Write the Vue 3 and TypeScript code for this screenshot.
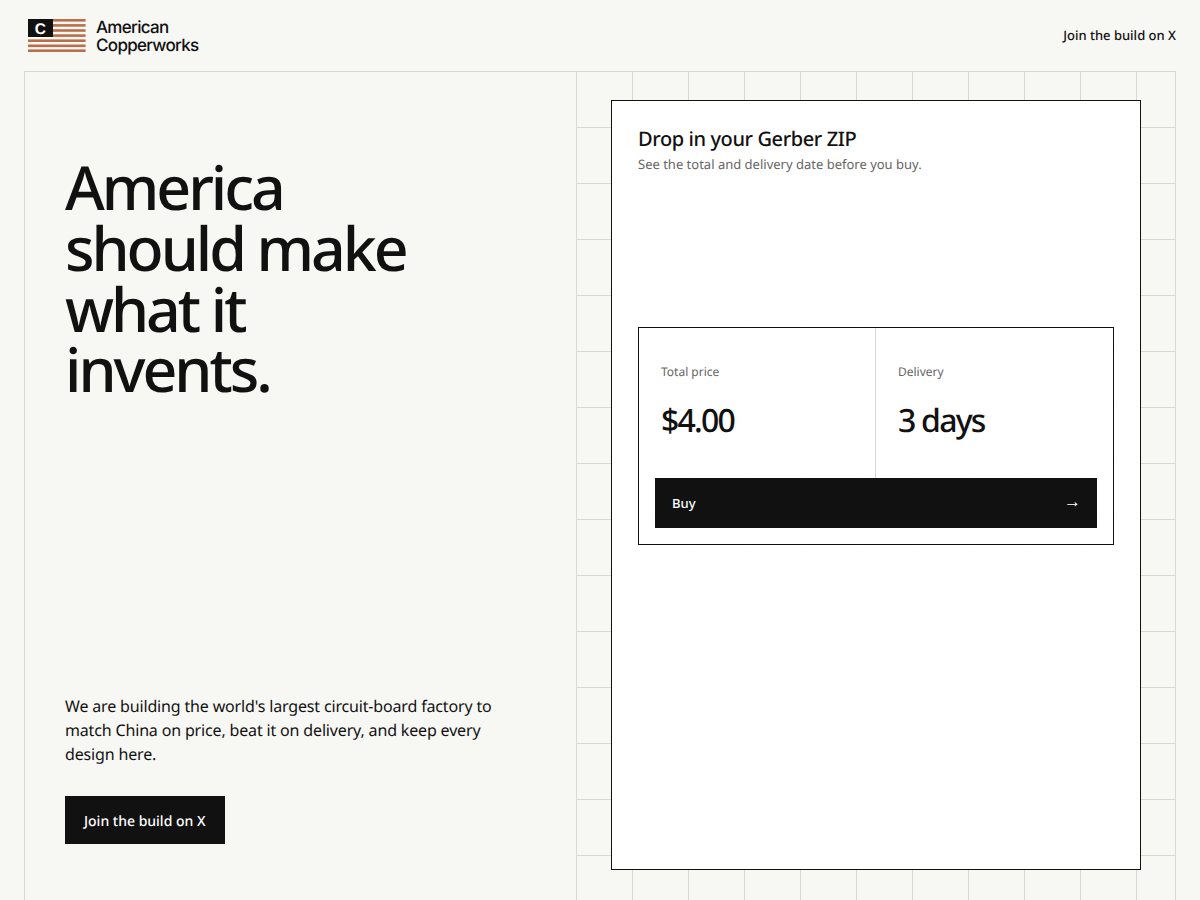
<template>
  <div class="page">
    <header class="topbar">
      <a class="brand" href="#">
        <svg class="flag" width="58" height="33" viewBox="0 0 58 33">
          <rect v-for="y in stripes" :key="y" x="0" :y="y" width="57.6" height="2.6" fill="#b8704c" />
          <rect x="0" y="0" width="25" height="18" fill="#111111" />
          <text x="12.3" y="15.2" text-anchor="middle" class="flag-c">C</text>
        </svg>
        <span class="brand-name">American<br />Copperworks</span>
      </a>
      <a class="top-link" href="#">Join the build on X</a>
    </header>

    <main class="frame">
      <section class="intro">
        <h1>America should make what it invents.</h1>
        <div class="intro-foot">
          <p>We are building the world's largest circuit-board factory to match China on price, beat it on delivery, and keep every design here.</p>
          <a class="join" href="#">Join the build on X</a>
        </div>
      </section>

      <section class="board">
        <div class="card">
          <h2>Drop in your Gerber ZIP</h2>
          <p class="sub">See the total and delivery date before you buy.</p>
          <div class="quote">
            <div class="stats">
              <div v-for="s in stats" :key="s.label" class="stat">
                <span class="stat-label">{{ s.label }}</span>
                <strong class="stat-value">{{ s.value }}</strong>
              </div>
            </div>
            <button class="buy" type="button">
              <span>Buy</span>
              <span class="arrow">→</span>
            </button>
          </div>
        </div>
      </section>
    </main>
  </div>
</template>

<script setup lang="ts">
const stripes: number[] = [0, 5.1, 10.2, 15.3, 20.4, 25.5, 30.4]

const stats: { label: string; value: string }[] = [
  { label: 'Total price', value: '$4.00' },
  { label: 'Delivery', value: '3 days' },
]
</script>

<style>
html,
body {
  margin: 0;
  background: #f7f7f4;
  overflow: hidden;
}
</style>

<style scoped>
.page {
  height: 900px;
  overflow: hidden;
  background: #f7f7f4;
  color: #111111;
  font-family: "Noto Sans", sans-serif;
  text-rendering: geometricPrecision;
}

a {
  color: inherit;
  text-decoration: none;
}

.topbar {
  height: 71px;
  padding: 0 24px 0 28px;
  box-sizing: border-box;
  display: flex;
  align-items: center;
  justify-content: space-between;
}

.brand {
  display: flex;
  align-items: center;
  gap: 10px;
  padding-top: 2px;
}

.flag {
  display: block;
  margin-top: -2px;
}

.flag-c {
  font-family: "Liberation Sans", sans-serif;
  font-size: 15.5px;
  font-weight: 700;
  fill: #ffffff;
}

.brand-name {
  font-family: Inter, sans-serif;
  font-size: 17px;
  line-height: 18px;
  letter-spacing: -0.04em;
  font-weight: 500;
}

.top-link {
  padding-bottom: 2px;
  font-size: 13px;
  font-weight: 500;
}

.frame {
  margin: 0 24px;
  height: 860px;
  border: 1px solid #d8d8d4;
  display: flex;
}

.intro {
  width: 552px;
  flex: none;
  box-sizing: border-box;
  padding: 85px 40px 88px;
  border-right: 1px solid #d8d8d4;
  display: flex;
  flex-direction: column;
  justify-content: space-between;
}

h1 {
  margin: 0;
  max-width: 360px;
  font-size: 60.8px;
  line-height: 1;
  font-weight: 500;
  letter-spacing: -0.05em;
}

.intro-foot p {
  margin: 0 0 30px;
  max-width: 440px;
  font-size: 16px;
  line-height: 24px;
  letter-spacing: -0.01em;
}

.join {
  display: inline-flex;
  align-items: center;
  height: 48px;
  padding: 2px 19px 0;
  box-sizing: border-box;
  background: #111111;
  color: #ffffff;
  font-size: 14px;
  font-weight: 500;
}

.board {
  flex: 1;
  padding: 28px 34px;
  background-image:
    linear-gradient(to top, #d8d8d4 1px, transparent 1px),
    linear-gradient(to left, #d8d8d4 1px, transparent 1px);
  background-size: 56px 56px;
}

.card {
  height: 770px;
  box-sizing: border-box;
  padding: 25px 26px;
  background: rgba(255, 255, 255, 0.97);
  border: 1px solid #111111;
}

h2 {
  margin: 0;
  font-size: 20px;
  line-height: 26px;
  font-weight: 500;
  letter-spacing: -0.02em;
}

.sub {
  margin: 2px 0 0;
  font-size: 13px;
  line-height: 20px;
  color: #666666;
}

.quote {
  margin-top: 153px;
  border: 1px solid #111111;
  padding: 0 16px 16px;
}

.stats {
  display: grid;
  grid-template-columns: 1fr 1fr;
  margin: 0 -16px;
}

.stat {
  height: 150px;
  box-sizing: border-box;
  padding: 36px 22px 0;
  display: flex;
  flex-direction: column;
}

.stat:first-child {
  border-right: 1px solid #d8d8d4;
}

.stat-label {
  font-size: 12px;
  line-height: 16px;
  color: #666666;
}

.stat-value {
  margin-top: 21px;
  font-size: 32px;
  line-height: 40px;
  font-weight: 500;
  letter-spacing: -0.055em;
}

.buy {
  width: 100%;
  height: 50px;
  padding: 0 17px;
  border: 0;
  background: #111111;
  color: #ffffff;
  font-family: inherit;
  font-size: 13px;
  font-weight: 500;
  display: flex;
  align-items: center;
  justify-content: space-between;
}

.arrow {
  font-size: 17px;
  line-height: 1;
  font-weight: 400;
  margin: -6px -1px 0 0;
}
</style>
